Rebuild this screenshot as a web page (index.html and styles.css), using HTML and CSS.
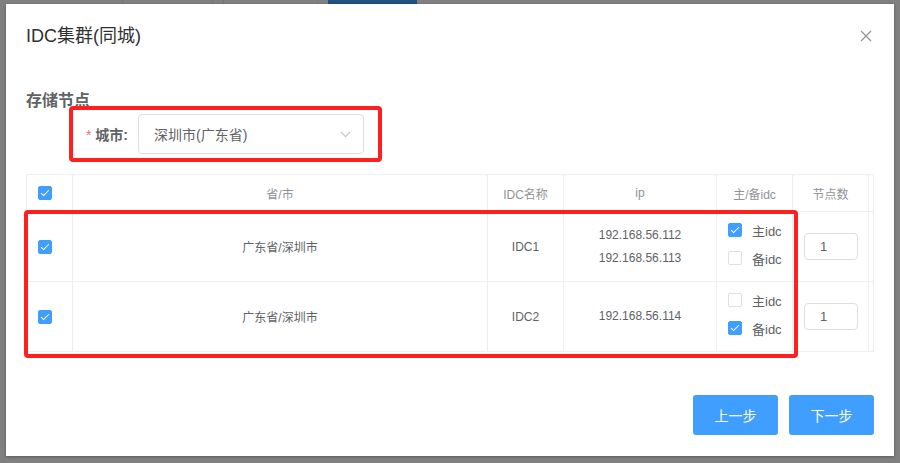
FILE: index.html
```html
<!DOCTYPE html>
<html lang="zh-CN">
<head>
<meta charset="utf-8">
<title>IDC集群(同城)</title>
<link rel="stylesheet" href="styles.css">
</head>
<body>
<div class="topbar">
  <span class="seg seg1"></span>
  <span class="seg seg2"></span>
  <span class="seg seg3"></span>
  <span class="seg seg4"></span>
  <span class="seg seg-blue"></span>
  <span class="seg seg-rest"></span>
</div>
<div class="stage">
  <div class="dialog">
    <header class="dlg-head">
      <span class="dlg-title">IDC集群(同城)</span>
      <span class="dlg-close">
        <svg width="12" height="12" viewBox="0 0 12 12"><path d="M1 1 L11 11 M11 1 L1 11" stroke="#909399" stroke-width="1.3" fill="none"/></svg>
      </span>
    </header>
    <div class="dlg-body">
      <div class="section">存储节点</div>
      <div class="form-item">
        <label class="form-label"><span class="req">*</span>城市:</label>
        <div class="select">
          <span class="select-text">深圳市(广东省)</span>
          <svg class="chev" width="11" height="7" viewBox="0 0 11 7"><path d="M0.8 0.8 L5.5 5.6 L10.2 0.8" stroke="#c0c4cc" stroke-width="1.1" fill="none"/></svg>
        </div>
      </div>
      <table class="grid">
        <colgroup>
          <col class="c-sel"><col class="c-city"><col class="c-name"><col class="c-ip"><col class="c-role"><col class="c-num"><col class="c-gut">
        </colgroup>
        <thead>
          <tr>
            <th class="sel"><span class="cb on"></span></th>
            <th>省/市</th>
            <th>IDC名称</th>
            <th>ip</th>
            <th>主/备idc</th>
            <th>节点数</th>
            <th class="gut"></th>
          </tr>
        </thead>
        <tbody>
          <tr>
            <td class="sel"><span class="cb on"></span></td>
            <td>广东省/深圳市</td>
            <td>IDC1</td>
            <td class="ips"><div>192.168.56.112</div><div>192.168.56.113</div></td>
            <td class="role">
              <div class="roles">
                <div class="opt"><span class="cb on"></span><span class="opt-label">主idc</span></div>
                <div class="opt"><span class="cb"></span><span class="opt-label">备idc</span></div>
              </div>
            </td>
            <td class="num"><div class="inp">1</div></td>
            <td class="gut"></td>
          </tr>
          <tr>
            <td class="sel"><span class="cb on"></span></td>
            <td>广东省/深圳市</td>
            <td>IDC2</td>
            <td class="ips"><div>192.168.56.114</div></td>
            <td class="role">
              <div class="roles">
                <div class="opt"><span class="cb"></span><span class="opt-label">主idc</span></div>
                <div class="opt"><span class="cb on"></span><span class="opt-label">备idc</span></div>
              </div>
            </td>
            <td class="num"><div class="inp">1</div></td>
            <td class="gut"></td>
          </tr>
        </tbody>
      </table>
    </div>
    <footer class="dlg-foot">
      <button class="btn">上一步</button>
      <button class="btn">下一步</button>
    </footer>
    <div class="mark mark-form"></div>
    <div class="mark mark-rows"></div>
  </div>
</div>
</body>
</html>
```

FILE: styles.css
```css
* { box-sizing: border-box; }
html, body { margin: 0; padding: 0; }
body {
  width: 900px;
  height: 463px;
  overflow: hidden;
  background: #808080;
  font-family: "Liberation Sans", "Noto Sans CJK SC", sans-serif;
  color: #606266;
}

.topbar {
  display: flex;
  height: 4px;
}
.seg { height: 4px; border-right: 1px solid #767676; }
.seg1 { width: 123px; }
.seg2 { width: 90px; }
.seg3 { width: 11px; }
.seg4 { width: 94px; border-right-color: #7a7a7a; }
.seg-blue { background: #22507f; border-right: 0; margin-left: 10px; width: 89px; }
.seg-rest { flex: 1; border-right: 0; }

.stage {
  padding-left: 6px;
}

.dialog {
  position: relative;
  width: 888px;
  height: 452px;
  background: #fff;
  box-shadow: 0 1px 3px rgba(0,0,0,.3);
  display: flex;
  flex-direction: column;
}

.dlg-head {
  display: flex;
  justify-content: space-between;
  align-items: flex-start;
  padding: 20px 22px 10px 20px;
  height: 54px;
}
.dlg-title {
  font-size: 18px;
  line-height: 24px;
  color: #303133;
}
.dlg-close {
  display: flex;
  margin-top: 6px;
}

.dlg-body {
  padding: 0 21px 0 20px;
}

.section {
  margin-top: 32px;
  font-size: 16px;
  line-height: 22px;
  font-weight: bold;
  color: #606266;
  height: 22px;
}

.form-item {
  display: flex;
  align-items: center;
  margin-top: 2px;
  margin-left: 58px;
}
.form-label {
  width: 54px;
  padding-right: 10px;
  text-align: right;
  font-size: 14px;
  font-weight: bold;
  color: #606266;
  white-space: nowrap;
}
.req {
  color: #f56c6c;
  font-weight: normal;
  margin-right: 4px;
}
.select {
  width: 226px;
  height: 40px;
  border: 1px solid #dcdfe6;
  border-radius: 4px;
  display: flex;
  align-items: center;
  justify-content: space-between;
  padding: 0 12px 0 15px;
}
.select-text {
  font-size: 14px;
  color: #606266;
}
.chev { margin-top: 1px; }

.grid {
  margin-top: 20px;
  width: 847px;
  table-layout: fixed;
  border-collapse: collapse;
  border: 1px solid #ebeef5;
  font-size: 12px;
}
.c-sel { width: 46px; }
.c-city { width: 415px; }
.c-name { width: 76px; }
.c-ip { width: 153px; }
.c-role { width: 76px; }
.c-num { width: 76px; }
.c-gut { width: 5px; }

.grid th, .grid td {
  border: 1px solid #ebeef5;
  text-align: center;
  vertical-align: middle;
  padding: 0;
}
.grid th {
  height: 37px;
  color: #909399;
  font-weight: normal;
}
.grid td {
  height: 70px;
  color: #606266;
}
.grid .sel { text-align: left; padding-left: 11px; }
.grid .sel .cb { vertical-align: middle; }

.ips div { line-height: 23px; }

.grid .role { text-align: left; padding-left: 11px; }
.roles {
  display: flex;
  flex-direction: column;
  padding-bottom: 5px;
}
.opt {
  display: flex;
  align-items: center;
  height: 28px;
}
.opt-label {
  margin-left: 10px;
  font-size: 13px;
  color: #606266;
}

.cb {
  position: relative;
  display: inline-block;
  width: 14px;
  height: 14px;
  border: 1px solid #dcdfe6;
  border-radius: 2px;
  background: #fff;
}
.cb.on {
  background: #409eff;
  border-color: #409eff;
}
.cb.on::after {
  content: "";
  position: absolute;
  left: 4px;
  top: 1px;
  width: 3px;
  height: 7px;
  border: 1px solid #fff;
  border-left: 0;
  border-top: 0;
  transform: rotate(45deg);
}

.grid .num { text-align: left; padding-left: 11px; }
.inp {
  width: 54px;
  height: 27px;
  border: 1px solid #dcdfe6;
  border-radius: 4px;
  padding-left: 15px;
  line-height: 25px;
  font-size: 13px;
  color: #606266;
}

.dlg-foot {
  display: flex;
  justify-content: flex-end;
  gap: 11px;
  padding: 0 20px 0 0;
  margin-top: 43px;
}
.btn {
  width: 85px;
  height: 40px;
  border: 0;
  border-radius: 3px;
  background: #409eff;
  color: #fff;
  font-family: "Liberation Sans", "Noto Sans CJK SC", sans-serif;
  font-size: 14px;
  padding: 0;
}

.mark {
  position: absolute;
  border: 4.5px solid #fe1f1f;
  border-radius: 4px;
}
.mark-form {
  left: 63px;
  top: 102px;
  width: 313px;
  height: 56px;
}
.mark-rows {
  left: 18px;
  top: 206px;
  width: 774px;
  height: 148px;
}
```
